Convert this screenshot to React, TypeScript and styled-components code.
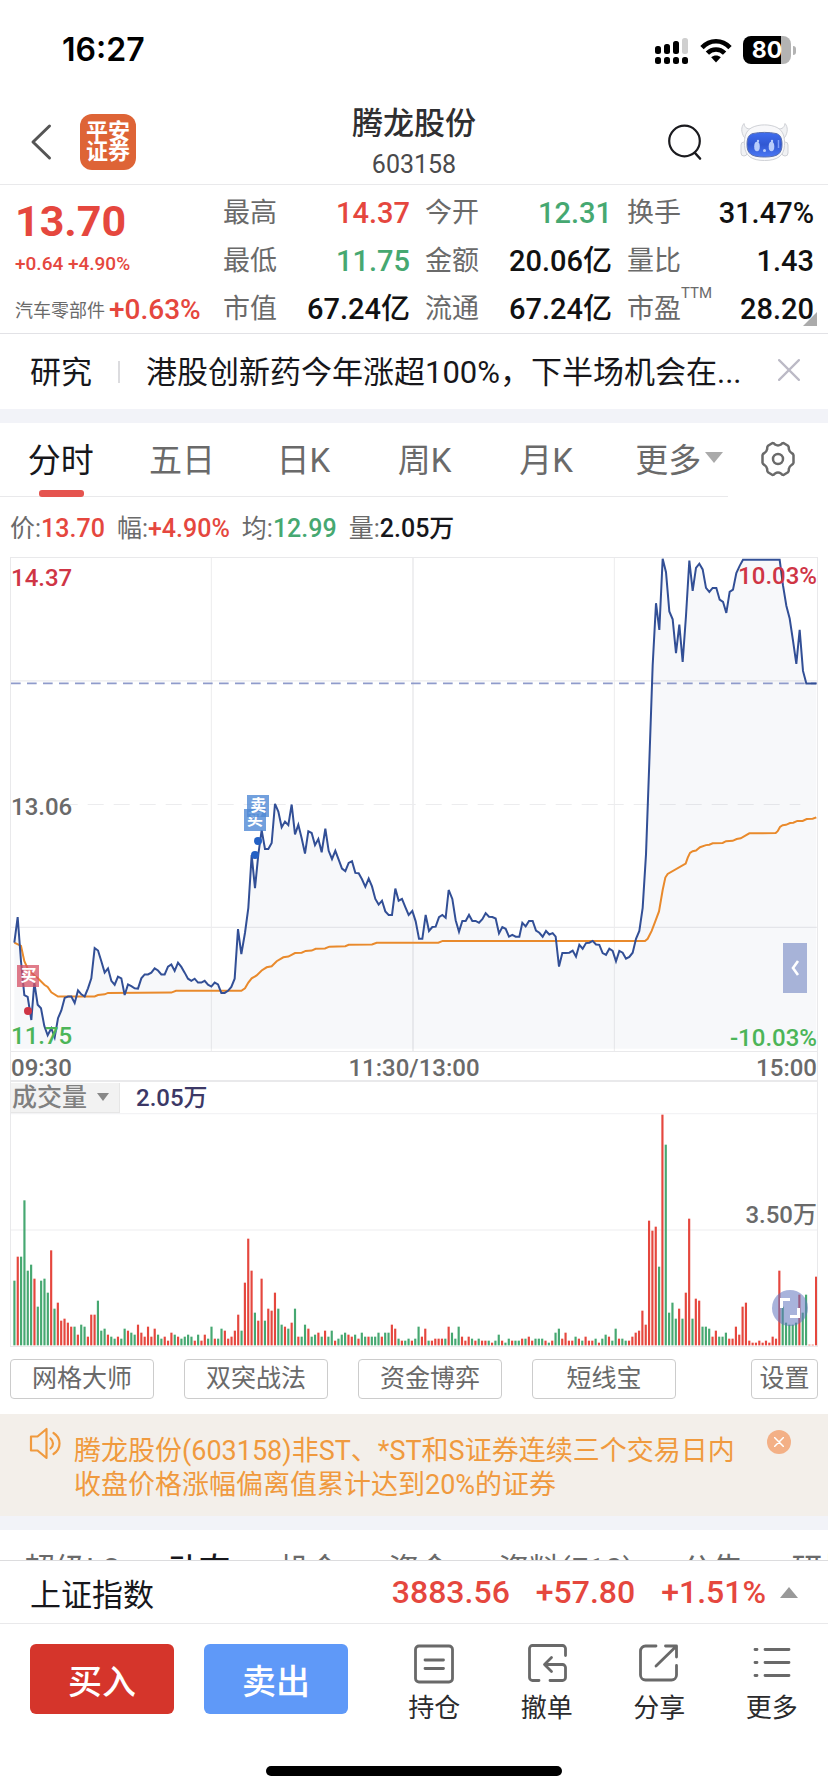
import React from 'react';
import styled, { createGlobalStyle, css } from 'styled-components';

const RED = '#e5473e';
const GREEN = '#46a871';
const INK = '#17171b';
const GREY = '#6a6a6a';
const LINE = '#e9e9eb';

const GlobalStyle = createGlobalStyle`
  * { box-sizing: border-box; }
  body {
    margin: 0;
    background: #fff;
    color: ${INK};
    font-family: Roboto, "Noto Sans CJK SC", sans-serif;
  }
  button, select {
    font-family: inherit;
    color: inherit;
    background: none;
    border: 0;
    padding: 0;
    margin: 0;
    cursor: pointer;
  }
  h1, p, dl, dd { margin: 0; }
  svg { display: block; }
`;

const Shell = styled.div`
  display: flex;
  flex-direction: column;
  height: 100vh;
`;

const Scroller = styled.main`
  flex: 1;
  min-height: 0;
  overflow-y: auto;
  scrollbar-width: none;
`;

/* ---------- status bar ---------- */

const StatusBar = styled.div`
  display: flex;
  align-items: center;
  justify-content: space-between;
  height: 98px;
  padding: 2px 32px 0 62px;
  color: #000;
`;

const Clock = styled.span`
  font: 600 32px/40px Inter, sans-serif;
`;

const StatusIcons = styled.div`
  display: flex;
  align-items: center;
  gap: 11px;
`;

const BatteryBox = styled.div`
  display: flex;
  align-items: center;
  gap: 2px;
`;

const BatteryBody = styled.div`
  width: 48px;
  height: 28px;
  border-radius: 8px;
  background: linear-gradient(90deg, #000 80%, #b3b3b3 80%);
  color: #fff;
  font: 700 23px/28px Inter, sans-serif;
  text-align: center;
`;

const BatteryTip = styled.div`
  width: 3px;
  height: 9px;
  border-radius: 0 4px 4px 0;
  background: #b3b3b3;
`;

/* ---------- header ---------- */

const Header = styled.header`
  display: grid;
  grid-template-columns: 1fr auto 1fr;
  align-items: center;
  height: 87px;
  padding: 0 30px;
  border-bottom: 1px solid ${LINE};
`;

const HeaderSide = styled.div<{ $end?: boolean }>`
  display: flex;
  align-items: center;
  gap: ${p => (p.$end ? 38 : 28)}px;
  padding-right: ${p => (p.$end ? 9 : 0)}px;
  justify-content: ${p => (p.$end ? 'flex-end' : 'flex-start')};
`;

const IconButton = styled.button`
  display: grid;
  place-items: center;
`;

const Brand = styled.div`
  width: 56px;
  height: 56px;
  padding: 8px 0;
  border-radius: 12px;
  background: #de6436;
  color: #fff;
  font-weight: 700;
  font-size: 22px;
  line-height: 20px;
  text-align: center;
`;

const TitleBlock = styled.div`
  padding-top: 5px;
  text-align: center;
`;

const StockName = styled.h1`
  font-size: 31px;
  line-height: 42px;
  font-weight: 500;
  color: #2f2f31;
`;

const StockCode = styled.p`
  font-size: 25px;
  line-height: 40px;
  color: #4a4a4c;
`;

/* ---------- quote ---------- */

const Quote = styled.section`
  position: relative;
  display: grid;
  grid-template-columns: 193px repeat(3, 1fr);
  column-gap: 15px;
  padding: 4px 14px 0 15px;
  border-bottom: 1px solid #e2e2e6;
`;

const PriceCol = styled.div`
  display: flex;
  flex-direction: column;
  color: ${RED};
  white-space: nowrap;
`;

const Price = styled.strong`
  font-size: 43px;
  line-height: 64px;
`;

const Change = styled.span`
  font-size: 19px;
  line-height: 22px;
  font-weight: 500;
`;

const Sector = styled.div`
  display: flex;
  align-items: center;
  gap: 4px;
  height: 48px;
  margin-top: auto;
  font-size: 28px;
  font-weight: 500;
`;

const SectorName = styled.span`
  font-size: 18px;
  font-weight: 400;
  color: ${GREY};
`;

const StatList = styled.dl``;

const Stat = styled.div`
  display: flex;
  justify-content: space-between;
  align-items: center;
  height: 48px;
  line-height: 48px;
`;

const StatLabel = styled.dt`
  position: relative;
  font-size: 27px;
  color: ${GREY};
`;

const Sup = styled.span`
  position: absolute;
  left: 100%;
  top: 0;
  font-size: 15px;
  line-height: 16px;
`;

const StatValue = styled.dd<{ $color?: string }>`
  font-size: 29px;
  font-weight: 500;
  color: ${p => p.$color ?? '#111'};
`;

const Corner = styled.i`
  position: absolute;
  right: 11px;
  bottom: 7px;
  border-left: 14px solid transparent;
  border-bottom: 14px solid #ababab;
`;

/* ---------- news ---------- */

const News = styled.section`
  display: flex;
  align-items: center;
  height: 75px;
  padding: 0 28px 4px 30px;
  font-size: 31px;
  white-space: nowrap;
`;

const NewsDivider = styled.i`
  width: 2px;
  height: 22px;
  margin: 4px 26px 0;
  background: #dcdcdf;
`;

const Headline = styled.a`
  flex: 1;
  min-width: 0;
  overflow: hidden;
  color: inherit;
  text-decoration: none;
`;

const Band = styled.div`
  height: 14px;
  background: #f2f3f8;
`;

/* ---------- period tabs ---------- */

const PeriodBar = styled.div`
  display: flex;
  height: 74px;
`;

const Periods = styled.nav`
  display: grid;
  grid-template-columns: repeat(6, 1fr);
  flex: 1;
  border-bottom: 1px solid ${LINE};
`;

const Period = styled.button<{ $active?: boolean; $menu?: boolean }>`
  position: relative;
  display: flex;
  align-items: center;
  justify-content: center;
  gap: 4px;
  padding: ${p => (p.$menu ? '0 0 4px 24px' : '0 0 4px')};
  font-size: 33px;
  white-space: nowrap;
  color: ${p => (p.$active ? INK : GREY)};
  ${p =>
    p.$active &&
    css`
      &::after {
        content: '';
        position: absolute;
        left: calc(50% - 22px);
        bottom: -1px;
        width: 45px;
        height: 7px;
        border-radius: 3px;
        background: #e5544f;
      }
    `}
`;

const Triangle = styled.i<{ $size: number; $color?: string; $up?: boolean }>`
  display: block;
  border: ${p => p.$size}px solid transparent;
  ${p => (p.$up ? 'border-top-width: 0;' : 'border-bottom-width: 0;')}
  ${p => (p.$up ? 'border-bottom' : 'border-top')}: ${p => p.$size + 2}px solid ${p => p.$color ?? '#aaa'};
`;

const GearCell = styled.div`
  display: grid;
  place-items: center;
  width: 100px;
  padding-bottom: 2px;
`;

/* ---------- chart ---------- */

const Readout = styled.div`
  display: flex;
  gap: 12px;
  height: 60px;
  padding: 0 10px;
  font-size: 25px;
  line-height: 64px;
  color: ${GREY};
`;

const Reading = styled.b<{ $color: string }>`
  font-weight: 500;
  color: ${p => p.$color};
`;

const ChartBox = styled.section`
  margin: 0 10px;
  border: 1px solid ${LINE};
`;

const Plot = styled.div<{ $height: number }>`
  position: relative;
  height: ${p => p.$height}px;
  & > svg {
    width: 100%;
    height: 100%;
  }
`;

const AxisLabel = styled.span<{ $top: number; $right?: boolean; $color: string }>`
  position: absolute;
  top: ${p => p.$top}px;
  ${p => (p.$right ? 'right: 0;' : 'left: 0;')}
  font-size: 24px;
  line-height: 28px;
  font-weight: 500;
  color: ${p => p.$color};
`;

const Marker = styled.span<{ $left: number; $top: number; $color: string }>`
  position: absolute;
  left: ${p => p.$left}%;
  top: ${p => p.$top}px;
  width: 22px;
  height: 22px;
  background: ${p => p.$color};
  color: #fff;
  font-size: 16px;
  font-weight: 700;
  line-height: 22px;
  text-align: center;
`;

const Dot = styled.i<{ $left: number; $top: number; $color: string }>`
  position: absolute;
  left: ${p => p.$left}%;
  top: ${p => p.$top}px;
  width: 8px;
  height: 8px;
  border-radius: 50%;
  background: ${p => p.$color};
`;

const Handle = styled.button`
  position: absolute;
  right: 10px;
  top: 385px;
  width: 24px;
  height: 50px;
  display: grid;
  place-items: center;
  background: #a7b3d8;
`;

const TimeAxis = styled.div`
  display: flex;
  justify-content: space-between;
  height: 31px;
  border-top: 1px solid ${LINE};
  border-bottom: 2px solid ${LINE};
  font-size: 24px;
  font-weight: 500;
  line-height: 32px;
  color: ${GREY};
`;

const VolumeHead = styled.div`
  display: flex;
  align-items: center;
  gap: 16px;
  height: 31px;
  font-size: 24px;
  line-height: 30px;
  font-weight: 500;
  color: #3c3866;
`;

const SelectWrap = styled.label`
  position: relative;
  display: flex;
  align-items: center;
  width: 109px;
  height: 30px;
  background: #f2f2f2;
  border-right: 1px solid #e6e6e6;
  border-bottom: 1px solid #e6e6e6;
  & > i {
    position: absolute;
    right: 10px;
    pointer-events: none;
  }
`;

const IndicatorSelect = styled.select`
  appearance: none;
  width: 100%;
  padding-left: 1px;
  font-size: 25px;
  line-height: 29px;
  font-weight: 500;
  color: #808080;
`;

const Expand = styled.button`
  position: absolute;
  right: 9px;
  top: 177px;
  width: 36px;
  height: 36px;
  border-radius: 50%;
  background: rgba(96, 116, 190, 0.55);
  display: grid;
  place-items: center;
`;

const Tools = styled.div`
  display: flex;
  gap: 30px;
  padding: 12px 10px 15px;
`;

const Tool = styled.button<{ $compact?: boolean }>`
  width: ${p => (p.$compact ? 67 : 144)}px;
  height: 40px;
  margin-left: ${p => (p.$compact ? 'auto' : 0)};
  border: 1px solid #ccc;
  border-radius: 4px;
  font-size: 25px;
  line-height: 36px;
  color: ${GREY};
`;

/* ---------- notice ---------- */

const Notice = styled.section`
  display: flex;
  align-items: flex-start;
  padding: 13px 37px 14px 29px;
  background: #f3efea;
  color: #f09a3e;
`;

const NoticeText = styled.p`
  flex: 1;
  padding: 7px 0 0 12px;
  font-size: 27px;
  line-height: 34px;
  & > span {
    display: block;
  }
`;

const NoticeClose = styled.button`
  width: 24px;
  height: 24px;
  margin-top: 3px;
  border-radius: 50%;
  background: #f3b086;
  display: grid;
  place-items: center;
`;

const SectionTabs = styled.nav`
  display: flex;
  gap: 48px;
  height: 72px;
  padding-left: 24px;
  overflow: hidden;
`;

const SectionTab = styled.button<{ $active?: boolean }>`
  flex: none;
  font-size: 31px;
  font-weight: ${p => (p.$active ? 500 : 400)};
  color: ${p => (p.$active ? INK : GREY)};
`;

/* ---------- bottom ---------- */

const Footer = styled.footer`
  background: #fff;
  border-top: 1px solid #dcdcde;
`;

const IndexBar = styled.div`
  display: flex;
  align-items: center;
  gap: 26px;
  height: 63px;
  padding: 0 30px;
  border-bottom: 1px solid ${LINE};
  font-size: 32px;
  font-weight: 500;
  color: ${RED};
`;

const IndexName = styled.span`
  margin-right: auto;
  font-size: 31px;
  font-weight: 400;
  color: ${INK};
`;

const IndexToggle = styled.button`
  margin-left: -12px;
`;

const Actions = styled.div`
  display: flex;
  gap: 30px;
  padding: 20px 0 0 30px;
`;

const TradeButton = styled.button<{ $color: string }>`
  flex: none;
  width: 144px;
  height: 70px;
  border-radius: 6px;
  background: ${p => p.$color};
  color: #fff;
  font-size: 34px;
  font-weight: 500;
`;

const Shortcuts = styled.nav`
  display: flex;
  flex: 1;
`;

const Shortcut = styled.button`
  flex: 1;
  display: flex;
  flex-direction: column;
  align-items: center;
  gap: 6px;
  font-size: 26px;
  line-height: 36px;
  color: #2b2b2d;
`;

const HomeIndicator = styled.div`
  width: 296px;
  height: 10px;
  margin: 40px auto 16px;
  border-radius: 5px;
  background: #000;
`;

/* ---------- data ---------- */

const PRICE_LINE =
  '43,1128 53,1056 63,1180 73,1275 83,1280 94,1345 103,1240 113,1302 123,1312 133,1362 143,1388 154,1368 164,1394 174,1340 184,1318 194,1283 204,1279 214,1279 224,1297 234,1262 244,1273 254,1279 264,1256 274,1228 284,1143 294,1150 304,1180 314,1212 324,1200 334,1235 344,1246 354,1223 364,1228 374,1275 384,1245 394,1250 404,1256 414,1257 424,1228 434,1217 444,1217 454,1212 464,1200 474,1206 484,1217 494,1217 504,1195 514,1189 524,1207 534,1184 544,1196 554,1212 564,1229 574,1235 584,1229 594,1240 604,1240 614,1235 624,1246 634,1251 644,1240 654,1245 664,1269 674,1269 684,1263 694,1252 704,1229 714,1090 724,1160 735,1100 745,1030 755,882 765,975 775,880 785,812 795,865 805,865 815,848 825,738 835,760 845,804 855,788 865,798 875,740 885,824 895,797 905,835 915,878 925,815 935,820 945,854 955,837 965,874 976,808 986,870 996,893 1006,870 1016,895 1026,920 1036,927 1046,904 1056,899 1066,932 1076,933 1086,950 1096,971 1106,948 1116,970 1126,1005 1136,1021 1146,1010 1156,1040 1166,1050 1176,1050 1186,976 1196,1010 1206,1005 1216,1028 1226,1050 1237,1039 1247,1068 1257,1117 ' +
  '1267,1117 1277,1050 1287,1095 1297,1084 1307,1083 1317,1056 1327,1050 1337,1058 1346,980 1357,1005 1367,1065 1377,1097 1387,1067 1397,1067 1407,1050 1417,1067 1427,1067 1437,1072 1447,1062 1457,1045 1467,1055 1477,1056 1487,1060 1497,1102 1507,1084 1517,1089 1527,1111 1537,1106 1547,1111 1558,1111 1567,1072 1577,1082 1587,1067 1598,1067 1608,1094 1618,1100 1628,1111 1638,1095 1648,1105 1658,1101 1667,1111 1677,1195 1687,1157 1697,1157 1708,1156 1718,1150 1728,1167 1738,1134 1748,1145 1758,1129 1768,1128 1778,1123 1788,1133 1798,1134 1808,1157 1818,1162 1828,1145 1838,1151 1848,1180 1858,1151 1868,1156 1878,1173 1888,1168 1898,1156 1908,1117 1918,1095 1928,1030 1938,880 1948,620 1958,350 1968,175 1978,250 1988,50 1998,88 2008,198 2018,220 2028,315 2038,235 2048,340 2058,210 2068,55 2078,140 2088,76 2098,64 2108,80 2118,132 2128,143 2138,132 2149,132 2159,165 2169,171 2179,202 2189,143 2199,137 2209,90 2219,70 2229,53 2339,53 2349,125 2359,182 2369,218 2379,280 2389,345 2399,250 2409,365 2419,400 2449,400';

const AVERAGE_LINE =
  '43,1128 63,1137 73,1180 83,1200 103,1220 113,1227 133,1246 143,1252 154,1267 174,1279 284,1279 294,1275 314,1273 324,1269 514,1268 528,1263 724,1263 735,1256 745,1240 755,1228 770,1220 785,1206 800,1197 815,1194 830,1180 850,1169 865,1167 885,1157 905,1156 917,1151 935,1150 947,1145 975,1144 988,1139 1036,1138 1046,1134 1116,1133 1130,1128 1315,1128 1328,1123 1935,1123 1943,1117 1955,1095 1965,1070 1977,1040 1988,980 1996,945 2003,935 2057,906 2063,890 2070,876 2078,871 2088,869 2100,860 2118,854 2128,853 2138,849 2168,848 2178,843 2198,842 2210,837 2222,835 2248,821 2327,820 2333,815 2340,803 2348,798 2358,797 2370,792 2380,791 2392,786 2408,786 2420,781 2438,780 2449,776';

const VOLUMES = (
  'g194 r266 g266 g435 g224 g242 r200 g116 g194 g200 g158 r285 g110 r128 r74 r80 r68 r56 g56 r32 g62 g56 r26 r92 r92 g134 g44 g50 r32 g26 g20 r26 g20 g50 r44 g38 g32 r62 r38 r26 r56 r26 r50 g32 g20 r26 r14 r38 g32 r26 g20 g26 g32 g26 r14 g32 r14 r32 g20 g56 r20 g20 g50 r44 r20 r26 r44 r92 g44 r188 r320 r224 g98 r74 r200 g74 r110 r104 r158 g110 g62 r56 g50 r68 g110 r26 g26 g62 r50 g26 g32 r38 g26 r44 g26 g44 r14 g20 g32 g38 r32 r26 g32 r20 g38 g26 r26 g26 g26 g38 r26 g38 g38 r62 r50 g20 r14 g14 g20 r14 g20 g56 ' +
  'r26 r50 g14 r14 r20 r20 r20 g20 r56 g38 g20 g56 r26 r14 r26 g20 r14 g20 r14 r14 g14 r8 g14 g32 r14 g8 g20 r14 g14 g14 r20 g20 r26 r14 g20 g20 g20 r14 g8 r14 g38 g50 r20 r38 r14 r14 g26 r20 g14 r26 r14 r14 g20 r8 g20 g32 r26 g14 g50 r20 g20 g14 r14 r26 r38 r44 r104 r62 r374 r344 r356 g236 r692 g602 g98 g128 g80 r110 g80 r158 r380 g80 r140 r134 g56 g56 g50 r26 r44 g26 g26 g38 r20 r20 r56 r32 r116 r128 r14 r8 r8 r14 r8 r14 r8 r26 r20 r224 g116 g68 g62 g62 g68 r152 g98 g152 r2 r2 r206'
)
  .split(' ')
  .map(v => ({ up: v[0] === 'r', size: Number(v.slice(1)) }));

const FIRST_BAR = 40;
const BAR_STEP = 2405 / (VOLUMES.length - 1);

const STATS: { label: string; value: string; color?: string; sup?: string }[][] = [
  [
    { label: '最高', value: '14.37', color: RED },
    { label: '最低', value: '11.75', color: GREEN },
    { label: '市值', value: '67.24亿' },
  ],
  [
    { label: '今开', value: '12.31', color: GREEN },
    { label: '金额', value: '20.06亿' },
    { label: '流通', value: '67.24亿' },
  ],
  [
    { label: '换手', value: '31.47%' },
    { label: '量比', value: '1.43' },
    { label: '市盈', value: '28.20', sup: 'TTM' },
  ],
];

const READINGS = [
  { label: '价', value: '13.70', color: RED },
  { label: '幅', value: '+4.90%', color: RED },
  { label: '均', value: '12.99', color: GREEN },
  { label: '量', value: '2.05万', color: INK },
];

/* ---------- icons ---------- */

const Cellular = () => (
  <svg width="34" height="27" viewBox="0 0 34 27">
    {[0, 9, 18, 27].map((x, i) => (
      <g key={x}>
        <rect x={x} y={[9, 7, 4, 1][i]} width="6" height={[8, 10, 13, 16][i]} rx="2.5" fill={i === 3 ? '#cfcfcf' : '#000'} />
        <rect x={x} y="20" width="6" height="7" rx="2.5" />
      </g>
    ))}
  </svg>
);

const Wifi = () => (
  <svg width="32" height="25" viewBox="0 0 32 25">
    <g fill="none" stroke="#000" strokeWidth="4.6">
      <path d="M2 9.6C9.8 1.2 22.2 1.2 30 9.6" />
      <path d="M7.4 15.2c4.8-5 12.4-5 17.2 0" />
    </g>
    <path d="M11.2 19.3c2.8-2.5 6.8-2.5 9.6 0L16 24.4z" />
  </svg>
);

const BackIcon = () => (
  <svg width="22" height="38" viewBox="0 0 22 38" fill="none" stroke="#555" strokeWidth="3" strokeLinecap="round" strokeLinejoin="round">
    <path d="M19.5 3 3 19l16.500 16" />
  </svg>
);

const SearchIcon = () => (
  <svg width="34" height="38" viewBox="0 0 34 38" fill="none" stroke="#1b1b1f" strokeWidth="2.2" strokeLinecap="round">
    <circle cx="16.500" cy="18" r="15.300" />
    <path d="m27 30 5 5.500" strokeWidth="2.600" />
  </svg>
);

const RobotIcon = () => (
  <svg width="49" height="40" viewBox="0 0 49 40">
    <defs>
      <linearGradient id="face" x1="0" y1="0" x2="0" y2="1">
        <stop offset="0" stopColor="#3f6df0" />
        <stop offset="0.5" stopColor="#3158d2" />
        <stop offset="1" stopColor="#4b78f5" />
      </linearGradient>
    </defs>
    <g fill="#f1f2f4" stroke="#cfd1d6" strokeWidth="1">
      <rect x="1" y="20" width="6" height="14" rx="3" />
      <rect x="42" y="20" width="6" height="14" rx="3" />
      <path d="M4 15C1 10 1 5 4 1.500 5 7 8 7 13 7l-7 10zM45 15c3-5 3-10 0-13.500C44 7 41 7 36 7l7 10z" />
      <path d="M12 5.500C19 2 30 2 37 5.500c6 3 8 9 7.500 18C44 34 37 38.500 24.500 38.500S5 34 4.500 23.500C4 14.500 6 8.500 12 5.500z" fill="#f8f8fa" />
    </g>
    <path d="M13 11.500c7-1.500 16-1.500 23 0 4 1 6 4 6 11 0 9-4 12.500-17.500 12.500S7 31.500 7 22.500c0-7 2-10 6-11z" fill="url(#face)" stroke="#5a6fae" />
    <g fill="#b9cdfb">
      <ellipse cx="17" cy="24.500" rx="2.800" ry="4.800" />
      <ellipse cx="31.500" cy="24.500" rx="2.800" ry="4.800" />
      <circle cx="18" cy="19" r="1.200" />
      <circle cx="32" cy="19" r="1.200" />
      <circle cx="24.500" cy="28.500" r="1.500" />
    </g>
    <path d="M38.500 18v8" stroke="#7f9ff8" strokeWidth="1.500" />
  </svg>
);

const CrossIcon = ({ size, color, width }: { size: number; color: string; width: number }) => (
  <svg width={size} height={size} viewBox="0 0 20 20" stroke={color} strokeWidth={width} strokeLinecap="round">
    <path d="m1 1 18 18M19 1 1 19" />
  </svg>
);

const GearIcon = () => (
  <svg width="36" height="36" viewBox="0 0 36 36" fill="none" stroke="#6a6a6a" strokeWidth="2.500" strokeLinejoin="round">
    <path d="M12.500 2q1.500 0 2.500 1.500 3 1.800 6 0Q22 2 23.500 2l4.500 2.800q1 1.200.8 3.200.7 2.800 2.700 4 1.800.8 2 2.200v7.600q-.2 1.400-2 2.200-2 1.200-2.700 4 .2 2-.8 3.200L23.500 34q-1.500 0-2.500-1.500-3-1.800-6 0Q14 34 12.500 34L8 31.200Q7 30 7.200 28q-.7-2.800-2.700-4-1.800-.8-2-2.200v-7.600q.2-1.400 2-2.200 2-1.200 2.700-4Q7 6 8 4.800z" />
    <circle cx="18" cy="18" r="5" />
  </svg>
);

const SpeakerIcon = () => (
  <svg width="33" height="33" viewBox="0 0 33 33" fill="none" stroke="#f09a3e" strokeWidth="2.200" strokeLinejoin="round" strokeLinecap="round">
    <path d="M2 9.500h6.500L17.500 2v29l-9-7.500H2z" />
    <path d="M21.500 11.500c3.300 2.700 3.300 7.300 0 10M24.500 6c8 5 8 16 0 21" />
  </svg>
);

const actionProps = {
  width: 40,
  height: 40,
  viewBox: '0 0 40 40',
  fill: 'none',
  stroke: '#696969',
  strokeWidth: 2.8,
  strokeLinecap: 'round' as const,
  strokeLinejoin: 'round' as const,
};

const SHORTCUTS = [
  {
    label: '持仓',
    icon: (
      <svg {...actionProps}>
        <rect x="1.500" y="2" width="37" height="36" rx="3.500" />
        <path d="M11 16h18.500M11 24.500h18.500" />
      </svg>
    ),
  },
  {
    label: '撤单',
    icon: (
      <svg {...actionProps}>
        <path d="M38.500 11.500V4.500a3 3 0 0 0-3-3h-30a3 3 0 0 0-3 3v29a3 3 0 0 0 3 3H12M23 36.500h12.500a3 3 0 0 0 3-3v-10a3 3 0 0 0-3-3H18.500M24.500 13.500l-7 7 7 7" />
      </svg>
    ),
  },
  {
    label: '分享',
    icon: (
      <svg {...actionProps}>
        <path d="M17 2H6.500a5 5 0 0 0-5 5v24a5 5 0 0 0 5 5h26a5 5 0 0 0 5-5v-9.500M26.500 2h11v11M37 2.500 17 22" />
      </svg>
    ),
  },
  {
    label: '更多',
    icon: (
      <svg {...actionProps}>
        <path d="M3 5.500h2M13 5.500h24M3 18.500h2M13 18.500h24M3 31.500h2M13 31.500h24" />
      </svg>
    ),
  },
];

/* ---------- charts ---------- */

const PriceChart = () => (
  <svg viewBox="33 48 2418 1384" preserveAspectRatio="none" role="img" aria-label="分时走势">
    <g stroke="#ececee" fill="none">
      <path d="M33 393H2451M33 1085H2451M634 48V1432M1843 48V1432" strokeWidth="3" />
      <path d="M1239 48V1432" strokeWidth="5" />
      <path d="M235 740H2451" strokeWidth="3" strokeDasharray="48 30" transform="translate(-50 0)" />
    </g>
    <polygon points={`43,1426 ${PRICE_LINE} 2449,1426`} fill="#3c5a96" fillOpacity="0.045" />
    <path d="M33 400H2451" stroke="#8f9bcb" strokeWidth="5" strokeDasharray="29 19" />
    <polyline points={AVERAGE_LINE} fill="none" stroke="#e98a2c" strokeWidth="2" vectorEffect="non-scaling-stroke" />
    <polyline points={PRICE_LINE} fill="none" stroke="#324f96" strokeWidth="2" vectorEffect="non-scaling-stroke" />
  </svg>
);

const VolumeChart = () => (
  <svg viewBox="33 101 2418 699" preserveAspectRatio="none" role="img" aria-label="成交量">
    <path d="M33 102H2451M33 452H2451" stroke="#f3f3f5" strokeWidth="5" />
    {VOLUMES.map((bar, i) => (
      <rect key={i} x={FIRST_BAR + i * BAR_STEP} y={798 - bar.size} width="6.500" height={bar.size} fill={bar.up ? RED : GREEN} />
    ))}
  </svg>
);

export default function App() {
  return (
    <Shell>
      <GlobalStyle />
      <StatusBar>
        <Clock>16:27</Clock>
        <StatusIcons>
          <Cellular />
          <Wifi />
          <BatteryBox>
            <BatteryBody>80</BatteryBody>
            <BatteryTip />
          </BatteryBox>
        </StatusIcons>
      </StatusBar>

      <Header>
        <HeaderSide>
          <IconButton aria-label="返回">
            <BackIcon />
          </IconButton>
          <Brand>
            平安
            <br />
            证券
          </Brand>
        </HeaderSide>
        <TitleBlock>
          <StockName>腾龙股份</StockName>
          <StockCode>603158</StockCode>
        </TitleBlock>
        <HeaderSide $end>
          <IconButton aria-label="搜索">
            <SearchIcon />
          </IconButton>
          <IconButton aria-label="助手">
            <RobotIcon />
          </IconButton>
        </HeaderSide>
      </Header>

      <Scroller>
        <Quote>
          <PriceCol>
            <Price>13.70</Price>
            <Change>+0.64 +4.90%</Change>
            <Sector>
              <SectorName>汽车零部件</SectorName>
              +0.63%
            </Sector>
          </PriceCol>
          {STATS.map((col, i) => (
            <StatList key={i}>
              {col.map(s => (
                <Stat key={s.label}>
                  <StatLabel>
                    {s.label}
                    {s.sup && <Sup>{s.sup}</Sup>}
                  </StatLabel>
                  <StatValue $color={s.color}>{s.value}</StatValue>
                </Stat>
              ))}
            </StatList>
          ))}
          <Corner />
        </Quote>

        <News>
          <span>研究</span>
          <NewsDivider />
          <Headline href="#news">港股创新药今年涨超100%，下半场机会在...</Headline>
          <IconButton aria-label="关闭资讯">
            <CrossIcon size={22} color="#bcbac6" width={2} />
          </IconButton>
        </News>
        <Band />

        <PeriodBar>
          <Periods>
            <Period $active>分时</Period>
            <Period>五日</Period>
            <Period>日K</Period>
            <Period>周K</Period>
            <Period>月K</Period>
            <Period $menu>
              更多
              <Triangle $size={9} />
            </Period>
          </Periods>
          <GearCell>
            <IconButton aria-label="图表设置">
              <GearIcon />
            </IconButton>
          </GearCell>
        </PeriodBar>

        <Readout>
          {READINGS.map(r => (
            <span key={r.label}>
              {r.label}:<Reading $color={r.color}>{r.value}</Reading>
            </span>
          ))}
        </Readout>

        <ChartBox>
          <Plot $height={493}>
            <PriceChart />
            <AxisLabel $top={6} $color="#cf3545">14.37</AxisLabel>
            <AxisLabel $top={235} $color={GREY}>13.06</AxisLabel>
            <AxisLabel $top={464} $color="#4cb558">11.75</AxisLabel>
            <AxisLabel $top={4} $right $color="#cf3545">10.03%</AxisLabel>
            <AxisLabel $top={466} $right $color="#4cb558">-10.03%</AxisLabel>
            <Marker $left={28.9} $top={251} $color="rgba(79, 136, 212, 0.8)">买</Marker>
            <Marker $left={29.3} $top={237} $color="rgba(79, 136, 212, 0.8)">卖</Marker>
            <Dot $left={30.2} $top={279} $color="#2360c4" />
            <Dot $left={29.8} $top={293} $color="#2360c4" />
            <Marker $left={0.8} $top={407} $color="rgba(214, 80, 100, 0.75)">买</Marker>
            <Dot $left={1.6} $top={449} $color="#cf3545" />
            <Handle aria-label="展开盘口">
              <svg width="10" height="16" viewBox="0 0 10 16" fill="none" stroke="#fff" strokeWidth="2.600">
                <path d="M8 1 3 8l5 7" />
              </svg>
            </Handle>
          </Plot>
          <TimeAxis>
            <span>09:30</span>
            <span>11:30/13:00</span>
            <span>15:00</span>
          </TimeAxis>
          <VolumeHead>
            <SelectWrap>
              <IndicatorSelect aria-label="指标">
                <option>成交量</option>
              </IndicatorSelect>
              <Triangle $size={6} $color="#888" />
            </SelectWrap>
            <span>2.05万</span>
          </VolumeHead>
          <Plot $height={233}>
            <VolumeChart />
            <AxisLabel $top={88} $right $color={GREY}>3.50万</AxisLabel>
            <Expand aria-label="全屏">
              <svg width="22" height="22" viewBox="0 0 22 22" fill="none" stroke="#fff" strokeWidth="3">
                <path d="M2.500 11V2.500H11M19.500 11v8.500H11" />
              </svg>
            </Expand>
          </Plot>
        </ChartBox>

        <Tools>
          <Tool>网格大师</Tool>
          <Tool>双突战法</Tool>
          <Tool>资金博弈</Tool>
          <Tool>短线宝</Tool>
          <Tool $compact>设置</Tool>
        </Tools>

        <Notice>
          <SpeakerIcon />
          <NoticeText>
            <span>腾龙股份(603158)非ST、*ST和S证券连续三个交易日内</span>
            <span>收盘价格涨幅偏离值累计达到20%的证券</span>
          </NoticeText>
          <NoticeClose aria-label="关闭提示">
            <CrossIcon size={10} color="#fff" width={3} />
          </NoticeClose>
        </Notice>
        <Band />

        <SectionTabs>
          <SectionTab>超级L2</SectionTab>
          <SectionTab $active>动态</SectionTab>
          <SectionTab>机会</SectionTab>
          <SectionTab>资金</SectionTab>
          <SectionTab>资料(F10)</SectionTab>
          <SectionTab>公告</SectionTab>
          <SectionTab>研报</SectionTab>
        </SectionTabs>
      </Scroller>

      <Footer>
        <IndexBar>
          <IndexName>上证指数</IndexName>
          <span>3883.56</span>
          <span>+57.80</span>
          <span>+1.51%</span>
          <IndexToggle aria-label="展开指数">
            <Triangle as="span" $size={9} $color="#999" $up />
          </IndexToggle>
        </IndexBar>
        <Actions>
          <TradeButton $color="#d5352b">买入</TradeButton>
          <TradeButton $color="#5f99f8">卖出</TradeButton>
          <Shortcuts>
            {SHORTCUTS.map(s => (
              <Shortcut key={s.label}>
                {s.icon}
                {s.label}
              </Shortcut>
            ))}
          </Shortcuts>
        </Actions>
        <HomeIndicator />
      </Footer>
    </Shell>
  );
}
